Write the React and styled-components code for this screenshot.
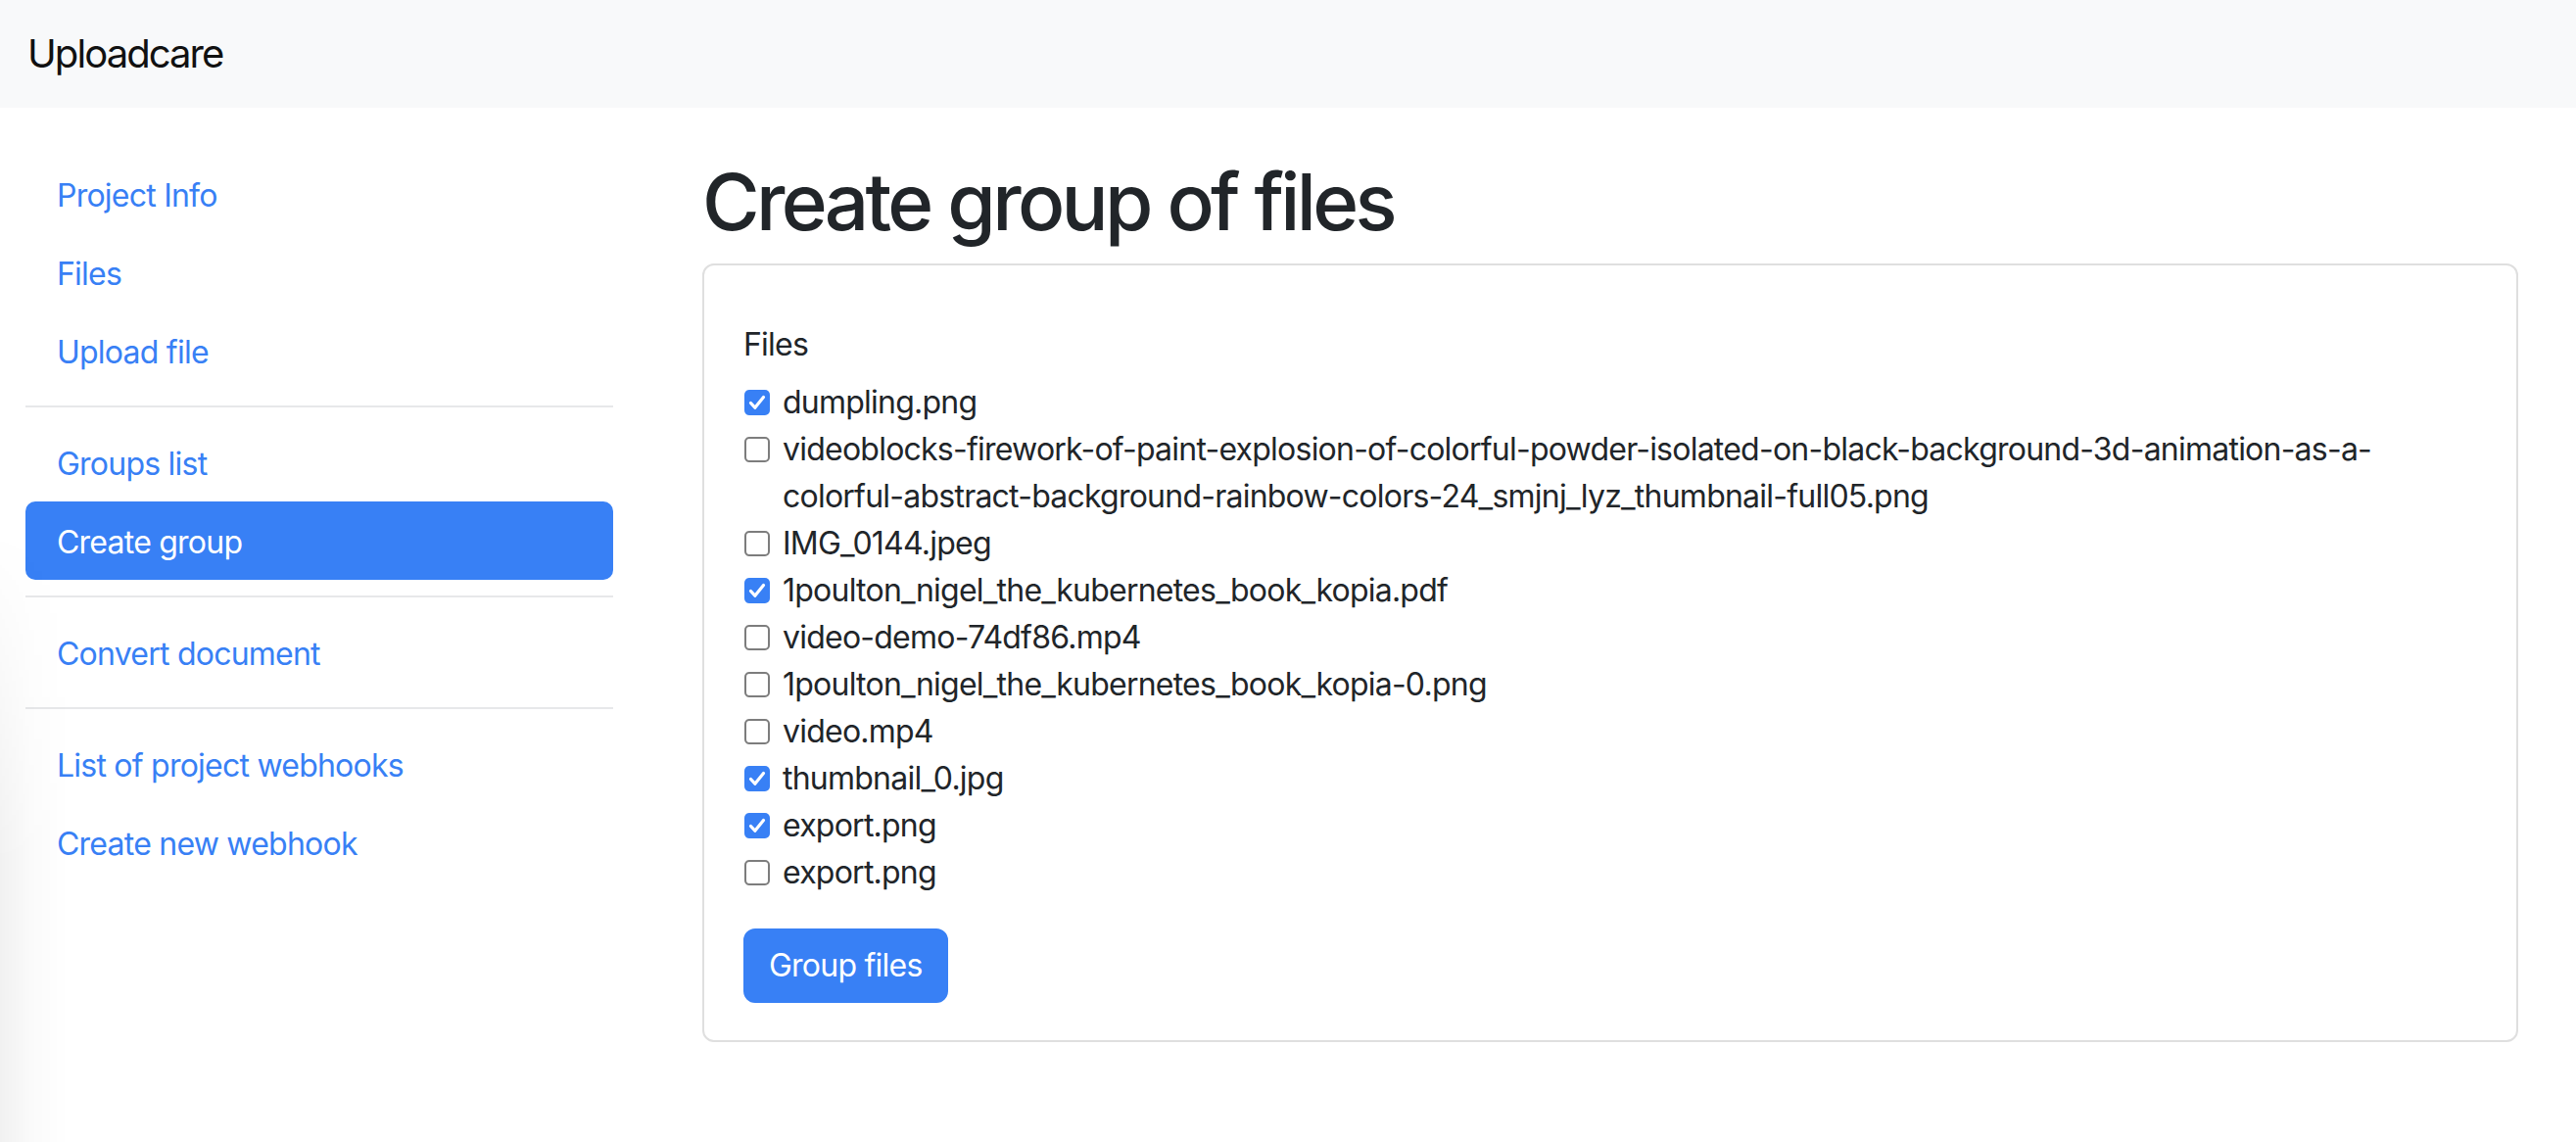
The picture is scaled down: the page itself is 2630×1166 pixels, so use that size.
import React from "react";
import styled, { createGlobalStyle } from "styled-components";

const BLUE = "#3880f5";

const Global = createGlobalStyle`
  html, body { margin: 0; padding: 0; background: #fff; }
  body {
    font-family: Inter, "Liberation Sans", sans-serif;
    color: #212529;
    font-size: 32px;
    line-height: 48px;
    letter-spacing: -0.024em;
  }
  * { box-sizing: border-box; }
`;

const Page = styled.div`
  min-height: 1166px;
  position: relative;
`;

const EdgeShade = styled.div`
  position: fixed;
  left: 0;
  top: 540px;
  bottom: 0;
  width: 70px;
  pointer-events: none;
  background: linear-gradient(to right, rgba(0, 0, 0, 0.055), rgba(0, 0, 0, 0.02) 45%, rgba(0, 0, 0, 0));
  -webkit-mask-image: linear-gradient(to bottom, transparent, #000 55%);
  mask-image: linear-gradient(to bottom, transparent, #000 55%);
`;

const Navbar = styled.header`
  height: 110px;
  background: #f8f9fa;
  padding: 25px 28px 25px;
  display: flex;
  align-items: flex-start;
`;

const Brand = styled.a`
  font-size: 40px;
  line-height: 60px;
  letter-spacing: -0.048em;
  color: #111;
  text-decoration: none;
`;

const Body = styled.div`
  display: flex;
  align-items: flex-start;
  padding: 48px 59px 0 26px;
  gap: 91px;
`;

const Sidebar = styled.nav`
  width: 600px;
  flex: none;
  display: flex;
  flex-direction: column;
`;

const NavLink = styled.a`
  display: block;
  padding: 18px 32px 14px;
  line-height: 48px;
  border-radius: 10px;
  text-decoration: none;
  color: ${(p) => (p.$active ? "#fff" : BLUE)};
  background: ${(p) => (p.$active ? BLUE : "transparent")};
`;

const Divider = styled.hr`
  margin: 16px 0;
  border: 0;
  border-top: 2px solid #e7e8ea;
  height: 0;
`;

const Main = styled.main`
  flex: 1;
  min-width: 0;
`;

const Title = styled.h1`
  margin: 0 0 15px;
  font-size: 80px;
  line-height: 96px;
  font-weight: 500;
  letter-spacing: -0.046em;
  color: #212529;
`;

const Card = styled.form`
  border: 2px solid #dfdfdf;
  border-radius: 12px;
  padding: 57px 40px 38px 40px;
`;

const Label = styled.div`
  margin-bottom: 11px;
`;

const List = styled.div`
  display: flex;
  flex-direction: column;
`;

const Row = styled.label`
  display: flex;
  align-items: flex-start;
  gap: 13px;
  line-height: 48px;
  padding-left: 1px;
`;

const Box = styled.span`
  flex: none;
  width: 26px;
  height: 26px;
  margin-top: 11px;
  border-radius: 5px;
  display: flex;
  align-items: center;
  justify-content: center;
  background: ${(p) => (p.$checked ? BLUE : "#fff")};
  border: ${(p) => (p.$checked ? "none" : "2px solid #7d7d7d")};
`;

const Name = styled.span`
  flex: 1;
  min-width: 0;
  overflow-wrap: anywhere;
`;

const Button = styled.button`
  margin-top: 33px;
  font: inherit;
  letter-spacing: inherit;
  line-height: 48px;
  padding: 12px 24px;
  color: #fff;
  background: ${BLUE};
  border: 2px solid ${BLUE};
  border-radius: 12px;
  cursor: pointer;
`;

const files = [
  ["dumpling.png", true],
  ["videoblocks-firework-of-paint-explosion-of-colorful-powder-isolated-on-black-background-3d-animation-as-a-colorful-abstract-background-rainbow-colors-24_smjnj_lyz_thumbnail-full05.png", false],
  ["IMG_0144.jpeg", false],
  ["1poulton_nigel_the_kubernetes_book_kopia.pdf", true],
  ["video-demo-74df86.mp4", false],
  ["1poulton_nigel_the_kubernetes_book_kopia-0.png", false],
  ["video.mp4", false],
  ["thumbnail_0.jpg", true],
  ["export.png", true],
  ["export.png", false],
];

function Check({ checked }) {
  return (
    <Box $checked={checked}>
      {checked && (
        <svg width="26" height="26" viewBox="0 0 26 26">
          <path d="M6.5 13.5 L10.8 18.2 L19.5 7.5" fill="none" stroke="#fff" strokeWidth="3.2" strokeLinecap="round" strokeLinejoin="round" />
        </svg>
      )}
    </Box>
  );
}

export default function App() {
  return (
    <Page>
      <Global />
      <Navbar>
        <Brand href="#">Uploadcare</Brand>
      </Navbar>
      <Body>
        <Sidebar>
          <NavLink href="#">Project Info</NavLink>
          <NavLink href="#">Files</NavLink>
          <NavLink href="#">Upload file</NavLink>
          <Divider />
          <NavLink href="#">Groups list</NavLink>
          <NavLink href="#" $active>Create group</NavLink>
          <Divider />
          <NavLink href="#">Convert document</NavLink>
          <Divider />
          <NavLink href="#">List of project webhooks</NavLink>
          <NavLink href="#">Create new webhook</NavLink>
        </Sidebar>
        <Main>
          <Title>Create group of files</Title>
          <Card onSubmit={(e) => e.preventDefault()}>
            <Label>Files</Label>
            <List>
              {files.map(([name, checked], i) => (
                <Row key={i}>
                  <Check checked={checked} />
                  <Name>{name}</Name>
                </Row>
              ))}
            </List>
            <Button type="submit">Group files</Button>
          </Card>
        </Main>
      </Body>
      <EdgeShade />
    </Page>
  );
}
